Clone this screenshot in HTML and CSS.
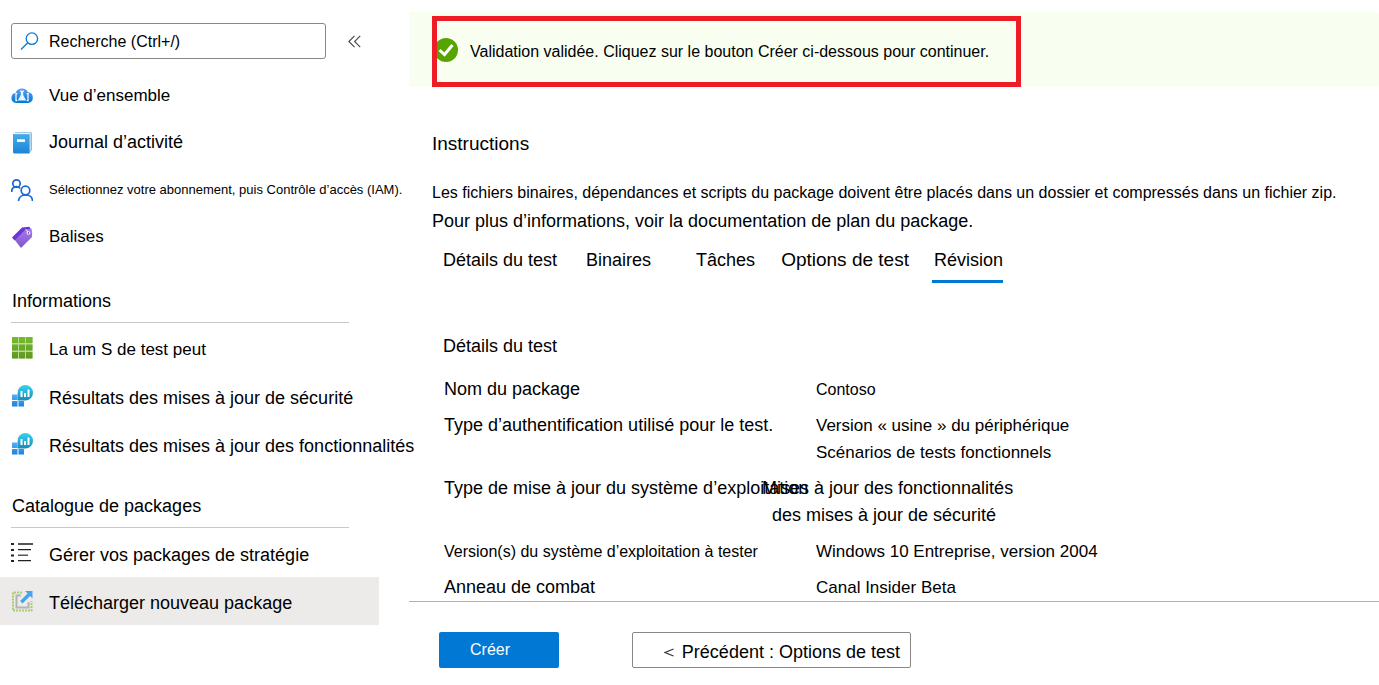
FILE: index.html
```html
<!DOCTYPE html>
<html lang="fr">
<head>
<meta charset="utf-8">
<title>Télécharger nouveau package</title>
<link rel="stylesheet" href="styles.css">
</head>
<body>
<svg class="defs" aria-hidden="true">
  <defs>
    <linearGradient id="blue" x1="0" y1="0" x2="0" y2="1"><stop offset="0" stop-color="#5ea0ef"/><stop offset="1" stop-color="#0078d4"/></linearGradient>
    <linearGradient id="book" x1="0" y1="0" x2="0" y2="1"><stop offset="0" stop-color="#4aaeea"/><stop offset="1" stop-color="#1a84d8"/></linearGradient>
    <linearGradient id="purple" x1="0" y1="0" x2="0" y2="1"><stop offset="0" stop-color="#a67af4"/><stop offset="1" stop-color="#7e56c2"/></linearGradient>
    <linearGradient id="green" x1="0" y1="0" x2="0" y2="22" gradientUnits="userSpaceOnUse"><stop offset="0" stop-color="#76bc2d"/><stop offset="1" stop-color="#5e9624"/></linearGradient>
    <linearGradient id="cyan" x1="0" y1="0" x2="0" y2="1"><stop offset="0" stop-color="#32d4f5"/><stop offset="1" stop-color="#198ab3"/></linearGradient>
    <linearGradient id="tile" x1="0" y1="9" x2="0" y2="22" gradientUnits="userSpaceOnUse"><stop offset="0" stop-color="#5ab0f4"/><stop offset="1" stop-color="#1a80d8"/></linearGradient>
    <symbol id="insight" viewBox="0 0 22 22">
      <path fill="url(#tile)" d="M1 9.500h5.500v5.500H1zM1 16h5.500v5.500H1zM7.500 16H13v5.500H7.500z"/>
      <path fill="url(#cyan)" d="M14.300 0a7.700 7.700 0 1 1 0 15.400H6.600V7.700A7.700 7.700 0 0 1 14.300 0z"/>
      <path fill="#fff" d="M9.500 6h2v6h-2zM13 8h2v4h-2zM16.500 4.500h2V12h-2z"/>
    </symbol>
  </defs>
</svg>
<div class="page">
  <aside class="sidebar">
    <div class="search-row">
      <label class="search">
        <svg class="glass" viewBox="0 0 20 20" fill="none" stroke="#0f78d4" stroke-width="1.400"><circle cx="12.500" cy="7" r="6"/><path d="M8.200 11.300 1 18.500"/></svg>
        <input type="text" placeholder="Recherche (Ctrl+/)" aria-label="Recherche">
      </label>
      <button class="collapse" type="button" aria-label="Réduire le menu">
        <svg viewBox="0 0 12 12" fill="none" stroke="#444"><path d="M6 .8.800 6 6 11.200M11.300.8 6.100 6l5.200 5.200"/></svg>
      </button>
    </div>
    <nav>
      <ul class="menu menu-top">
        <li><a href="#">
          <svg viewBox="0 0 22 22"><path fill="url(#blue)" d="M5 18a5 5 0 0 1-.5-9.900A6.800 6.800 0 0 1 17 7.300 5.400 5.400 0 0 1 17.300 18z"/><path fill="none" stroke="#fff" stroke-width="1.200" d="M6.300 8.700H5v7h1.300M15.700 8.700H17v7h-1.300"/><path fill="#e6f4ff" d="M9 5.500h4v1.200h-.8v3.300l3 5.400H6.800l3-5.400V6.700H9z"/></svg>
          <span class="t17">Vue d’ensemble</span></a></li>
        <li><a href="#">
          <svg viewBox="0 0 22 22"><path fill="#8fbfe0" d="M4 0h15.500q1.500 0 1.500 1.500V18l-2.500 3H4z"/><path fill="#e4f3fc" d="M4 .8h15.500V18l-1 1.500V2.200H4z"/><path fill="url(#book)" d="M2 1q0 1.200 2 1.200h14.500V21.500H3.500Q2 21.500 2 20z"/><path fill="#fff" d="M6 7.300h8v2.600H6z"/></svg>
          <span class="t18">Journal d’activité</span></a></li>
        <li><a href="#">
          <svg viewBox="0 0 22 22" fill="none" stroke="#1668d8" stroke-width="1.700"><circle cx="5.500" cy="4.500" r="3.700"/><circle cx="14.500" cy="11.500" r="4.300"/><path d="M.7 13c0-6.500 6-6 8.500-3.700M7.500 22c.5-8 14-8 14 0"/></svg>
          <span class="t13">Sélectionnez votre abonnement, puis Contrôle d’accès (IAM).</span></a></li>
        <li><a href="#">
          <svg viewBox="0 0 22 22"><path fill="url(#purple)" d="m3 13 11-9.500q4-1 6.500-1 1 4.500.5 8.500L10 22z"/><path fill="#6f35d6" d="M1 11.500 11 1.500l7.500-.8 1 2.300-5 .5L3.500 14.500z"/><path fill="none" stroke="#fff" d="m15 3.500 2 2.500"/><circle cx="17.500" cy="7" r="1.400" fill="#7e40d8" stroke="#fff"/></svg>
          <span class="t17">Balises</span></a></li>
      </ul>
      <h2 class="t18">Informations</h2>
      <ul class="menu">
        <li><a href="#">
          <svg viewBox="0 0 22 22"><path fill="#b9dc93" d="M1 0h20.500v21.500H1z"/><path fill="url(#green)" d="M1 0h6v6H1zM8 0h6v6H8zM15 0h6.500v6H15zM1 7.500h6v6H1zM8 7.500h6v6H8zM15 7.500h6.500v6H15zM1 15h6v6.500H1zM8 15h6v6.500H8zM15 15h6.500v6.500H15z"/></svg>
          <span class="t17">La um S de test peut</span></a></li>
        <li><a href="#"><svg><use href="#insight"/></svg><span class="t18">Résultats des mises à jour de sécurité</span></a></li>
        <li><a href="#"><svg><use href="#insight"/></svg><span class="t18">Résultats des mises à jour des fonctionnalités</span></a></li>
      </ul>
      <h2 class="t18">Catalogue de packages</h2>
      <ul class="menu">
        <li><a href="#">
          <svg viewBox="0 0 22 22"><path fill="#222" d="M0 1h3v2H0zM0 7h3v2H0zM0 12.500h3v2H0zM0 18h3v2H0zM7 7h13v1.300H7zM7 18h13v1.300H7z"/><path fill="#555" d="M7 1h15v2H7zM7 12.500h10V14H7z"/></svg>
          <span class="t18">Gérer vos packages de stratégie</span></a></li>
        <li><a class="current" href="#" aria-current="page">
          <svg viewBox="0 0 22 22"><path fill="none" stroke="#a3d06c" stroke-width="2" stroke-dasharray="2 1" d="M11 2.500H2V20.500h18.500V11"/><path fill="none" stroke="#b4b4b4" stroke-width="2" d="M10 5.500H5.500V17.500h12v-5.500"/><path fill="#45a4ee" d="M14 1h7.500v7.500l-2.400-2.400-7.600 7.400-2.400-2.400 7.500-7.500z"/></svg>
          <span class="t18">Télécharger nouveau package</span></a></li>
      </ul>
    </nav>
  </aside>
  <main>
    <div class="alert" role="status">
      <p class="alert-box">
        <svg viewBox="3 0 21 24"><circle cx="12" cy="12" r="12" fill="#57a300"/><path fill="none" stroke="#fff" stroke-width="3" d="m5.500 12 5 4.500 8-9.500"/></svg>
        <span>Validation validée. Cliquez sur le bouton Créer ci-dessous pour continuer.</span>
      </p>
    </div>
    <section class="intro">
      <h1>Instructions</h1>
      <p class="t16">Les fichiers binaires, dépendances et scripts du package doivent être placés dans un dossier et compressés dans un fichier zip.</p>
      <p class="t18">Pour plus d’informations, voir la documentation de plan du package.</p>
    </section>
    <nav class="tabs t18">
      <a href="#">Détails du test</a>
      <a href="#">Binaires</a>
      <a href="#">Tâches</a>
      <a class="t19" href="#">Options de test</a>
      <a class="active" href="#" aria-current="step">Révision</a>
    </nav>
    <section class="details">
      <h2 class="t18">Détails du test</h2>
      <dl>
        <div class="row"><dt class="t18">Nom du package</dt><dd class="t16">Contoso</dd></div>
        <div class="row"><dt class="t18">Type d’authentification utilisé pour le test.</dt><dd>Version « usine » du périphérique<br>Scénarios de tests fonctionnels</dd></div>
        <div class="row overlap t18"><dt>Type de mise à jour du système d’exploitation</dt><dd>Mises à jour des fonctionnalités<span class="indent">des mises à jour de sécurité</span></dd></div>
        <div class="row"><dt class="t16">Version(s) du système d’exploitation à tester</dt><dd>Windows 10 Entreprise, version 2004</dd></div>
        <div class="row"><dt class="t18">Anneau de combat</dt><dd>Canal Insider Beta</dd></div>
      </dl>
    </section>
    <footer>
      <button class="primary t16" type="button">Créer</button>
      <button class="secondary t18" type="button"><svg viewBox="0 0 10 10" fill="none" stroke="#333" stroke-width="1.200"><path d="M9.500 1 1 4.500l8.500 3.500"/></svg>Précédent : Options de test</button>
    </footer>
  </main>
</div>
</body>
</html>
```
FILE: styles.css
```css
* { box-sizing: border-box; }
body {
  margin: 0;
  background: #fff;
  color: #000;
  font-family: "Liberation Sans", Arial, sans-serif;
  font-size: 17px;
}
h1, h2, p, ul, dl, dd { margin: 0; padding: 0; font-weight: 400; }
ul { list-style: none; }
a { color: inherit; text-decoration: none; }
button, input { font-family: inherit; color: inherit; }
.defs { position: absolute; width: 0; height: 0; }
.t13 { font-size: 13px; }
.t16 { font-size: 16px; }
.t17 { font-size: 17px; }
.t18 { font-size: 18px; }
.t19 { font-size: 19px; }

.page {
  display: grid;
  grid-template-columns: 409px minmax(0, 1fr);
  min-height: 100vh;
}

/* Sidebar */
.sidebar { padding-top: 23px; white-space: nowrap; }
.search-row { display: flex; align-items: center; gap: 21px; padding-left: 11px; }
.search {
  display: flex;
  align-items: center;
  gap: 10px;
  width: 315px;
  height: 36px;
  padding: 0 8px;
  border: 1px solid #8a8886;
  border-radius: 3px;
}
.glass { width: 19px; height: 19px; flex: none; }
.search input {
  flex: 1;
  min-width: 0;
  padding: 1px 0 0;
  border: 0;
  outline: 0;
  background: none;
  font-size: 16px;
}
.search input::placeholder { color: #000; opacity: 1; }
.collapse { display: flex; padding: 1px; border: 0; background: none; }
.collapse svg { width: 13px; height: 13px; }

.menu a {
  display: flex;
  align-items: center;
  gap: 16px;
  height: 48px;
  margin-right: 30px;
  padding-left: 11px;
}
.menu span { padding-top: 4px; }
.menu svg { width: 22px; height: 22px; flex: none; }
.menu-top { padding: 13px 0 15px; }
.menu-top a { height: 47px; }
.menu-top span { padding-top: 0; }
.menu .current { background: #edebe9; }
.sidebar h2 {
  margin: 0 60px 0 11px;
  padding: 16px 1px 10px;
  border-bottom: 1px solid #c8c8c8;
  line-height: 21px;
}
.sidebar h2 + .menu { padding: 1px 0 12px; }

/* Main column */
main { padding-top: 12px; }
.alert {
  padding: 4px 23px 0;
  background: #f8fff0;
  border-radius: 2px;
}
.alert-box {
  display: flex;
  align-items: center;
  gap: 12px;
  width: 589px;
  height: 71px;
  border: 5px solid #ee1c25;
  font-size: 16px;
}
.alert-box svg { width: 21px; height: 24px; margin-bottom: 3px; }
.intro { padding: 43px 23px 0; line-height: 28px; }
.intro h1 { margin-bottom: 21px; font-size: 19px; }
.tabs { display: flex; padding: 9px 23px 0 34px; line-height: 32px; }
.tabs a:nth-child(2) { margin: 0 45px 0 29px; }
.tabs a:nth-child(4) { margin: 0 23px 0 26px; }
.tabs .active { padding: 0 0 4px 2px; border-bottom: 3px solid #0078d4; }

.details { border-bottom: 1px solid #b3b0ad; line-height: 27px; }
.details h2 { padding: 50px 34px 16px; }
.details dl { display: grid; gap: 9px; padding-left: 35px; }
.row { display: grid; grid-template-columns: 372px 1fr; white-space: nowrap; }
.overlap { grid-template-columns: 318px 1fr; }
.indent { display: block; padding-left: 10px; }

footer { display: flex; gap: 73px; padding: 30px; }
footer button { height: 36px; border-radius: 2px; }
.primary {
  width: 120px;
  padding: 0 31px;
  border: 0;
  background: #0078d4;
  color: #fff;
  text-align: left;
}
.secondary {
  display: flex;
  align-items: center;
  justify-content: flex-end;
  gap: 8px;
  width: 279px;
  padding: 5px 10px 0;
  border: 1px solid #8a8886;
  background: #fff;
}
.secondary svg { width: 10px; height: 10px; }
```
